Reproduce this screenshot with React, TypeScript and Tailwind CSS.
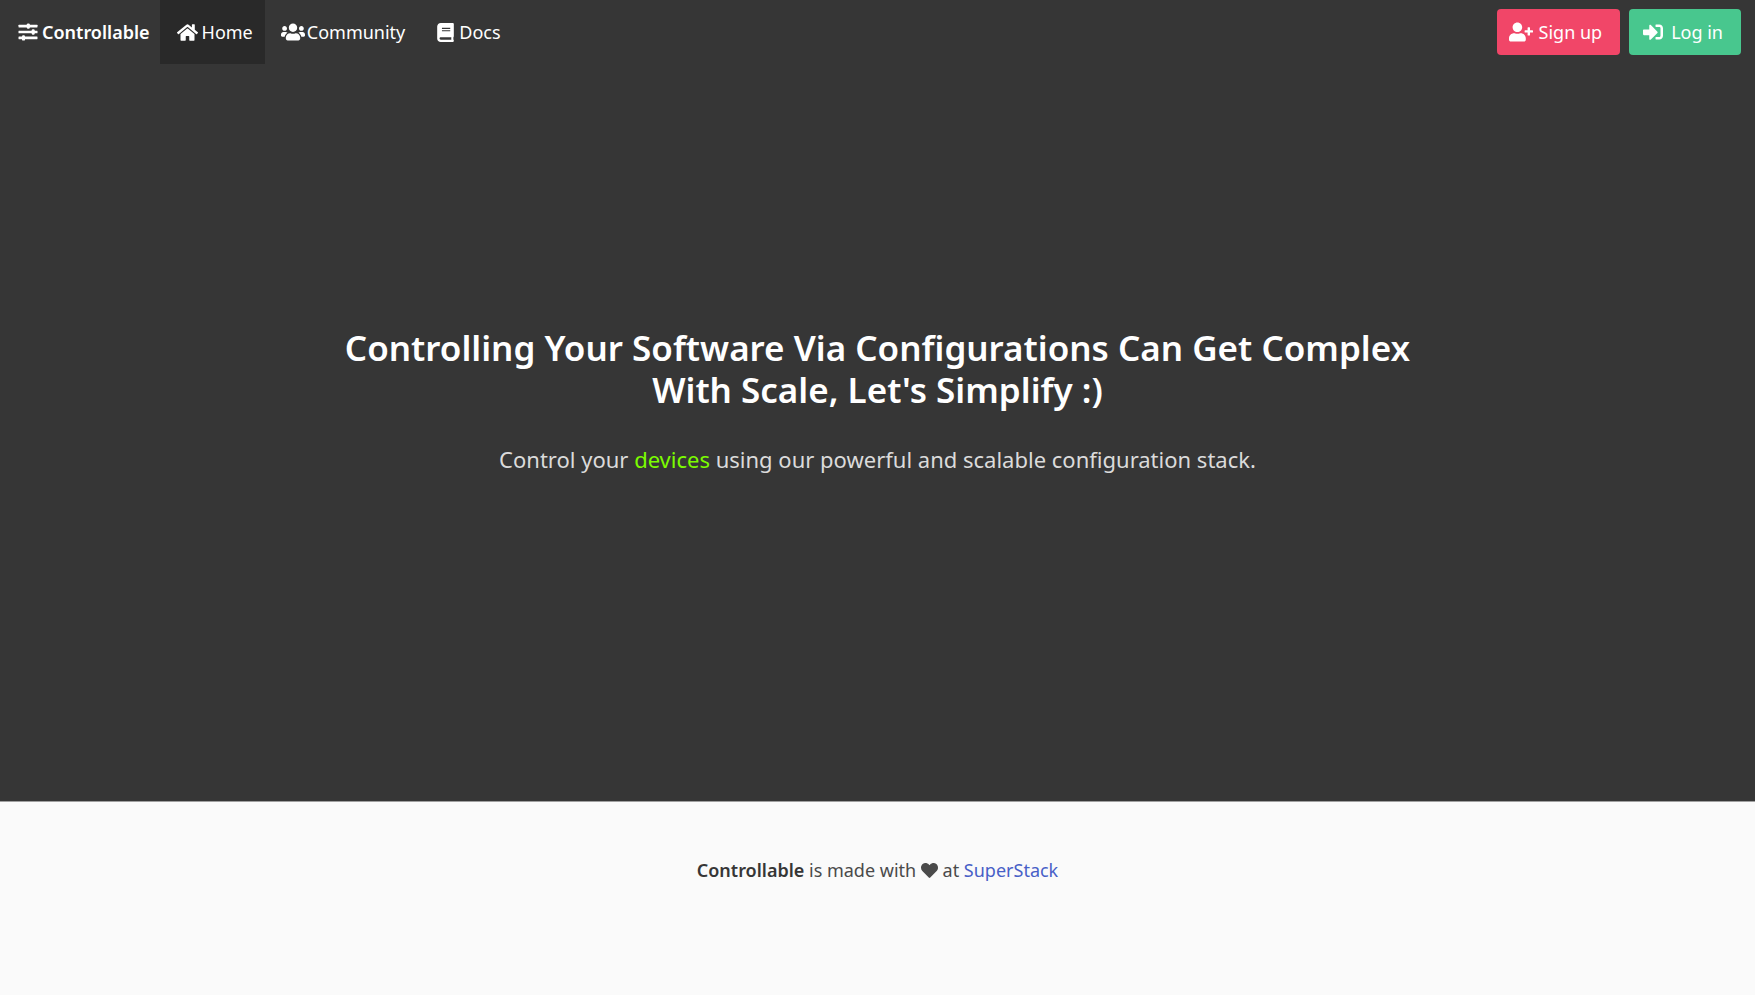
import type { ReactNode } from "react";
import { FaBook, FaHeart, FaHome, FaSignInAlt, FaUserPlus, FaUsers } from "react-icons/fa";

function SlidersIcon() {
  return (
    <svg width="20" height="20" viewBox="0 0 20 20" fill="currentColor" aria-hidden="true">
      <rect x="0.5" y="2.8" width="19" height="2.6" rx="0.4" />
      <rect x="0.5" y="8.7" width="19" height="2.6" rx="0.4" />
      <rect x="0.5" y="14.6" width="19" height="2.6" rx="0.4" />
      <rect x="8.8" y="1.4" width="3" height="5.4" rx="1.2" />
      <rect x="13.7" y="7.3" width="3" height="5.4" rx="1.2" />
      <rect x="4" y="13.2" width="3" height="5.4" rx="1.2" />
    </svg>
  );
}

function IconBox({ children }: { children: ReactNode }) {
  return <span className="flex w-7 shrink-0 items-center justify-center">{children}</span>;
}

function NavLink({ icon, active, children }: { icon: ReactNode; active?: boolean; children: ReactNode }) {
  return (
    <a
      href="#"
      aria-current={active ? "page" : undefined}
      className={`flex items-center pr-3 pl-3.5 text-white ${active ? "bg-[#292929]" : ""}`}
    >
      <IconBox>{icon}</IconBox>
      {children}
    </a>
  );
}

export default function App() {
  return (
    <div className="flex min-h-screen flex-col bg-[#fafafa] font-['Noto_Sans',sans-serif] text-[18px] leading-7 text-[#4a4a4a]">
      <section className="flex min-h-[802px] flex-col border-b border-[#a0a0a0] bg-[#363636]">
        <nav className="flex h-16 items-stretch justify-between pr-3.5">
          <div className="flex">
            <a href="#" className="flex items-center pr-2.5 pl-3.5 font-semibold text-white">
              <IconBox><SlidersIcon /></IconBox>
              Controllable
            </a>
            <NavLink active icon={<FaHome size={21} />}>Home</NavLink>
            <NavLink icon={<FaUsers size={24} />}>Community</NavLink>
            <NavLink icon={<FaBook size={19} />}>Docs</NavLink>
          </div>
          <div className="flex items-center gap-[9px]">
            <button className="flex h-[46px] items-center gap-1 rounded bg-[#f14668] pr-[18px] pl-2.5 text-white">
              <IconBox><FaUserPlus size={24} /></IconBox>
              Sign up
            </button>
            <button className="flex h-[46px] items-center gap-1 rounded bg-[#48c78e] pr-[18px] pl-2.5 text-white">
              <IconBox><FaSignInAlt size={20} /></IconBox>
              Log in
            </button>
          </div>
        </nav>
        <main className="flex flex-1 flex-col items-center justify-center gap-8 px-8 pb-16 text-center">
          <h1 className="max-w-[1100px] text-[35px] leading-[42px] font-semibold text-white">
            Controlling Your Software Via Configurations Can Get Complex With Scale, Let's Simplify :)
          </h1>
          <p className="text-[22px] leading-8 text-[#dbdbdb]">
            Control your <span className="text-[#7cfc00]">devices</span> using our powerful and scalable configuration stack.
          </p>
        </main>
      </section>
      <footer className="px-6 pt-[54px] pb-24 text-center">
        <p>
          <strong className="font-semibold text-[#363636]">Controllable</strong> is made with{" "}
          <FaHeart className="inline align-[-2px]" size={17} /> at{" "}
          <a href="#" className="text-[#485fc7]">SuperStack</a>
        </p>
      </footer>
    </div>
  );
}
